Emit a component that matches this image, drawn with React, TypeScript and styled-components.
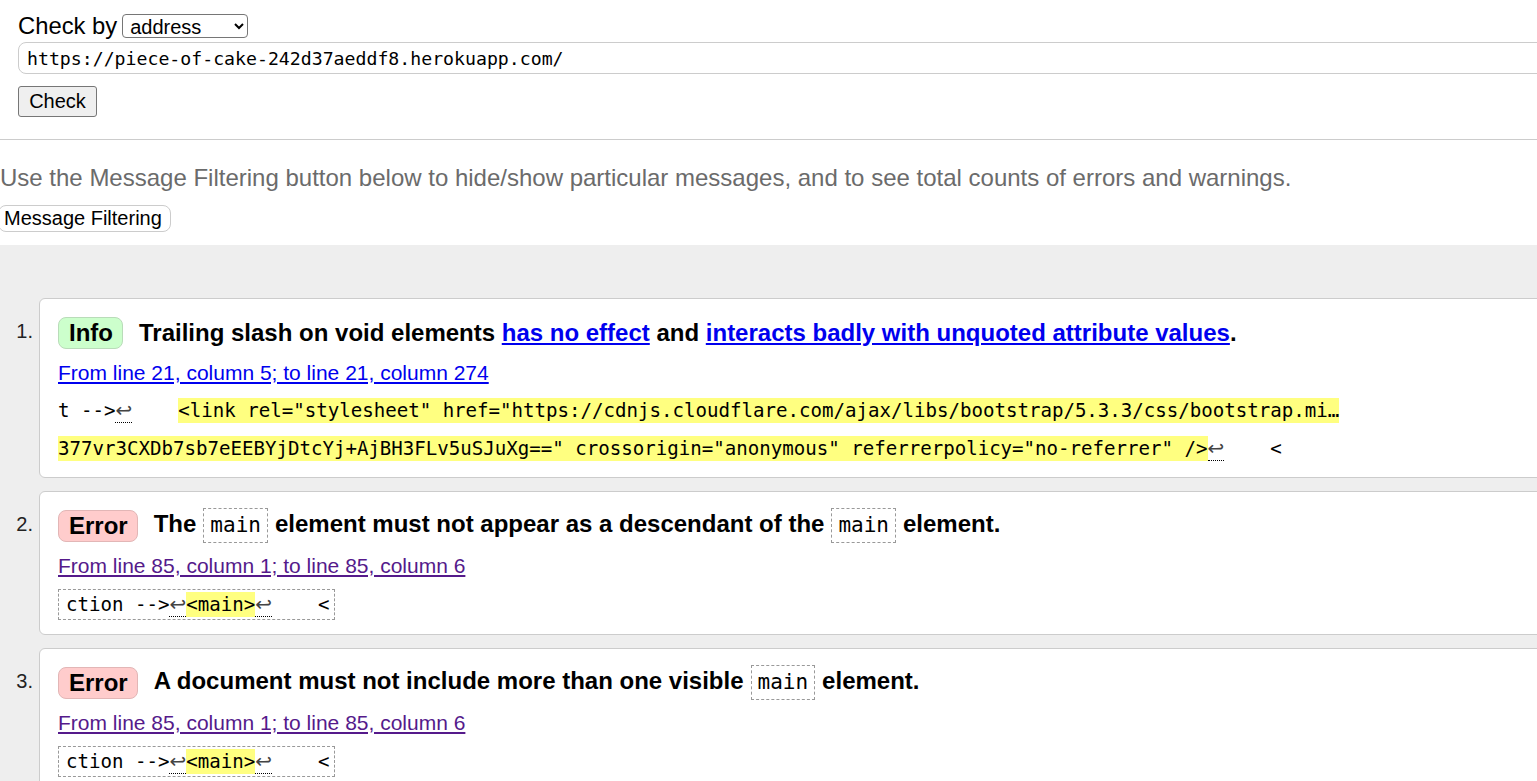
import React from "react";
import styled, { createGlobalStyle } from "styled-components";

const Global = createGlobalStyle`
  html, body { margin: 0; padding: 0; background: #fff; overflow: hidden; }
  body { font-family: "Liberation Sans", Arial, sans-serif; color: #000; }
`;

const Page = styled.div`
  width: 1537px;
  overflow: hidden;
`;

const Form = styled.form`
  padding: 14px 0 0 18px;
  display: flex;
  flex-direction: column;
  align-items: flex-start;
`;

const CheckByRow = styled.div`
  display: flex;
  align-items: center;
  height: 24px;
  font-size: 23.8px;
  gap: 5px;
`;

const Select = styled.select`
  width: 126px;
  height: 24px;
  font-size: 20px;
  font-family: "Liberation Sans", Arial, sans-serif;
  border: 1px solid #767676;
  border-radius: 4px;
  padding: 0 0 0 3px;
  background: #fff;
  color: #000;
`;

const UrlInput = styled.input`
  box-sizing: border-box;
  width: 1560px;
  height: 32px;
  margin-top: 4px;
  border: 1px solid #ccc;
  border-radius: 8px;
  padding: 0 8px;
  font-family: "DejaVu Sans Mono", monospace;
  font-size: 18.2px;
  color: #000;
  background: #fff;
`;

const NativeButton = styled.button`
  box-sizing: border-box;
  margin-top: 12px;
  width: 79px;
  height: 31px;
  font-family: "Liberation Sans", Arial, sans-serif;
  font-size: 20px;
  background: #efefef;
  border: 1px solid #767676;
  border-radius: 3px;
  color: #000;
  padding: 0;
`;

const Rule = styled.hr`
  margin: 22px 0 0;
  border: 0;
  border-top: 1px solid #ccc;
  height: 0;
`;

const Intro = styled.p`
  margin: 24px 0 0;
  font-size: 24px;
  line-height: 27px;
  color: #6b6b6b;
  white-space: nowrap;
`;

const FilterButton = styled.button`
  display: block;
  box-sizing: border-box;
  margin: 14px 0 0 -2px;
  height: 27px;
  padding: 0 8px 0 5px;
  font-family: "Liberation Sans", Arial, sans-serif;
  font-size: 20px;
  background: #fff;
  border: 1px solid #ccc;
  border-radius: 8px;
  color: #000;
`;

const Results = styled.section`
  margin-top: 13px;
  background: #eee;
  padding-top: 53px;
  min-height: 600px;
`;

const List = styled.ol`
  list-style: none;
  margin: 0;
  padding: 0;
  width: 1600px;
`;

const Item = styled.li`
  display: grid;
  grid-template-columns: 39px 1fr;
  margin-bottom: 13px;
`;

const Marker = styled.span`
  text-align: right;
  padding: 16px 6px 0 0;
  font-size: 20px;
  line-height: 35px;
  color: #222;
`;

const Card = styled.div`
  background: #fff;
  border: 1px solid #ccc;
  border-radius: 6px;
  padding: 16px 0 14px 18px;
`;

const Title = styled.div`
  display: flex;
  align-items: center;
  min-height: 35px;
  font-size: 24px;
  font-weight: bold;
  white-space: nowrap;
`;

const Badge = styled.span<{ $kind: "info" | "error" }>`
  display: inline-flex;
  align-items: center;
  box-sizing: border-box;
  height: 32px;
  padding: 0 9px 0 10px;
  margin-right: 16px;
  border: 1px solid ${(p) => (p.$kind === "info" ? "#b9dcb9" : "#e2b6b6")};
  border-radius: 8px;
  background: ${(p) => (p.$kind === "info" ? "#ccffcc" : "#ffcccc")};
`;

const TitleLink = styled.a`
  color: #0000ee;
  text-decoration: underline;
`;

const TitleCode = styled.code`
  display: inline-block;
  font-family: "DejaVu Sans Mono", monospace;
  font-weight: normal;
  font-size: 21px;
  line-height: 33px;
  padding: 0 6px;
  margin: 0 7px;
  border: 1px dashed #999;
`;

const Location = styled.a<{ $visited?: boolean }>`
  display: block;
  width: max-content;
  margin-top: 11px;
  font-size: 21px;
  line-height: 24px;
  color: ${(p) => (p.$visited ? "#551a8b" : "#0000ee")};
  text-decoration: underline;
`;

const Extract = styled.div<{ $boxed?: boolean }>`
  font-family: "DejaVu Sans Mono", monospace;
  font-size: 19.1px;
  white-space: pre;
  color: #000;
  ${(p) =>
    p.$boxed
      ? `
    display: inline-block;
    margin-top: 11px;
    line-height: 29px;
    padding: 0 5px 0 7px;
    border: 1px dashed #999;
  `
      : `
    display: block;
    margin: 7px 0 -5px;
    line-height: 38px;
  `}
`;

const Line = styled.div``;

const Mark = styled.mark`
  background: #ffff80;
  color: #000;
  padding: 1px 0;
`;

const Ret = styled.abbr`
  font-family: "DejaVu Sans", sans-serif;
  font-size: 20px;
  line-height: 0;
  color: #444;
  text-decoration: none;
  border-bottom: 1px dotted #000;
`;

const NL = () => <Ret title="U+000A NEWLINE">↩</Ret>;

export default function App() {
  return (
    <Page>
      <Global />
      <Form onSubmit={(e) => e.preventDefault()}>
        <CheckByRow>
          <span>Check by</span>
          <Select defaultValue="address">
            <option value="address">address</option>
            <option value="file">file upload</option>
            <option value="text">text input</option>
          </Select>
        </CheckByRow>
        <UrlInput
          type="url"
          defaultValue="https://piece-of-cake-242d37aeddf8.herokuapp.com/"
        />
        <NativeButton type="submit">Check</NativeButton>
      </Form>
      <Rule />
      <Intro>
        Use the Message Filtering button below to hide/show particular messages, and to see total
        counts of errors and warnings.
      </Intro>
      <FilterButton type="button">Message Filtering</FilterButton>
      <Results>
        <List>
          <Item>
            <Marker>1.</Marker>
            <Card>
              <Title>
                <Badge $kind="info">Info</Badge>
                <span>
                  Trailing slash on void elements <TitleLink href="#">has no effect</TitleLink> and{" "}
                  <TitleLink href="#">interacts badly with unquoted attribute values</TitleLink>.
                </span>
              </Title>
              <Location href="#">From line 21, column 5; to line 21, column 274</Location>
              <Extract>
                <Line>
                  {"t -->"}
                  <NL />
                  {"    "}
                  <Mark>
                    {'<link rel="stylesheet" href="https://cdnjs.cloudflare.com/ajax/libs/bootstrap/5.3.3/css/bootstrap.mi…'}
                  </Mark>
                </Line>
                <Line>
                  <Mark>
                    {'377vr3CXDb7sb7eEEBYjDtcYj+AjBH3FLv5uSJuXg==" crossorigin="anonymous" referrerpolicy="no-referrer" />'}
                  </Mark>
                  <NL />
                  {"    <"}
                </Line>
              </Extract>
            </Card>
          </Item>
          <Item>
            <Marker>2.</Marker>
            <Card>
              <Title>
                <Badge $kind="error">Error</Badge>
                <span>
                  The<TitleCode>main</TitleCode>element must not appear as a descendant of the
                  <TitleCode>main</TitleCode>element.
                </span>
              </Title>
              <Location href="#" $visited>
                From line 85, column 1; to line 85, column 6
              </Location>
              <Extract $boxed>
                {"ction -->"}
                <NL />
                <Mark>{"<main>"}</Mark>
                <NL />
                {"    <"}
              </Extract>
            </Card>
          </Item>
          <Item>
            <Marker>3.</Marker>
            <Card>
              <Title>
                <Badge $kind="error">Error</Badge>
                <span>
                  A document must not include more than one visible<TitleCode>main</TitleCode>
                  element.
                </span>
              </Title>
              <Location href="#" $visited>
                From line 85, column 1; to line 85, column 6
              </Location>
              <Extract $boxed>
                {"ction -->"}
                <NL />
                <Mark>{"<main>"}</Mark>
                <NL />
                {"    <"}
              </Extract>
            </Card>
          </Item>
        </List>
      </Results>
    </Page>
  );
}
